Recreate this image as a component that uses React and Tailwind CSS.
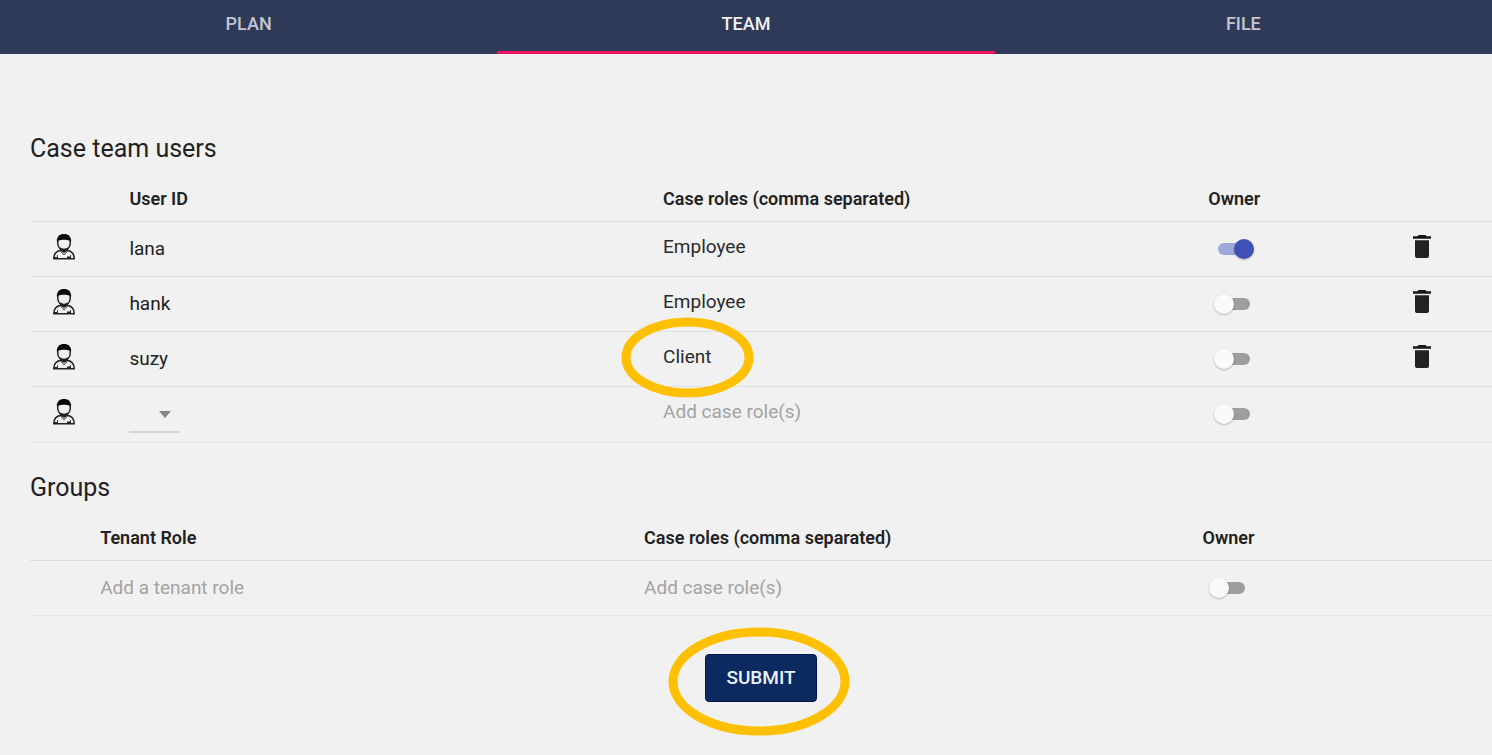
import React from "react";

const TABS = ["PLAN", "TEAM", "FILE"];

const USERS = [
  { id: "lana", role: "Employee", owner: true },
  { id: "hank", role: "Employee", owner: false },
  { id: "suzy", role: "Client", owner: false, marked: true },
];

const FIELD =
  "block w-full bg-transparent text-[19px] leading-6 text-[#2b2b2b] outline-none placeholder:text-[#a3a3a3] placeholder:opacity-100";

function PersonIcon() {
  return (
    <svg className="block h-7 w-6" viewBox="0 0 24 28" fill="none" aria-hidden="true">
      <path d="M5.8 7.5v3c0 4 3 6.400 6.200 6.400s6.200-2.400 6.200-6.400v-3" stroke="#222" strokeWidth="1.500" />
      <path d="M4.800 8.300C4.800 3.500 7.600 1 12 1s7.200 2.500 7.200 7.300C16 7 14 6.800 12 6.800S8 7 4.800 8.300Z" fill="#080808" />
      <path d="M8 14.500c2.500 1.500 5.500 1.500 8 0v3l-4 2.500-4-2.500Z" fill="#222" />
      <path d="M8.800 17.200C4.500 18 1.800 20 1.800 25.700h20.400c0-5.700-2.700-7.700-7-8.500" stroke="#222" strokeWidth="1.500" />
      <path d="M5.500 22v3.700M18.500 22v3.700M8.500 18l3.500 4 3.500-4" stroke="#444" strokeWidth="1" />
      <path d="M1.800 24h4v2h-4ZM15 23.500h4V26h-4Z" fill="#222" />
    </svg>
  );
}

function TrashIcon() {
  return (
    <svg className="block h-6 w-5" viewBox="0 0 20 24" fill="none" aria-hidden="true">
      <path d="M6.500 0h7l1 1.200H19v2.600H1V1.200h4.500Z" fill="#181818" />
      <path d="M3 5.300h14V21a2 2 0 0 1-2 2H5a2 2 0 0 1-2-2Z" fill="#222" />
    </svg>
  );
}

function Ring({ className, width, height }) {
  return (
    <svg
      className={`pointer-events-none absolute ${className}`}
      width={width}
      height={height}
      viewBox={`0 0 ${width} ${height}`}
      fill="none"
      aria-hidden="true"
    >
      <ellipse
        cx={width / 2}
        cy={height / 2}
        rx={width / 2 - 5}
        ry={height / 2 - 5}
        stroke="#ffc000"
        strokeWidth="9"
      />
    </svg>
  );
}

function Switch({ label, defaultChecked }) {
  return (
    <input
      type="checkbox"
      role="switch"
      aria-label={label}
      defaultChecked={defaultChecked}
      className="relative mx-2.5 block h-3 w-8 cursor-pointer appearance-none rounded-full bg-[#9e9e9e] before:absolute before:-top-1 before:-left-1 before:size-5 before:rounded-full before:bg-[#fafafa] before:shadow-[0_1px_2px_rgba(0,0,0,0.25)] before:content-[''] checked:bg-[#9fa8da] checked:before:left-4 checked:before:bg-[#3f51b5]"
    />
  );
}

function Heading({ children }) {
  return <h2 className="text-[25px] leading-8 text-[#222]">{children}</h2>;
}

function Th({ children }) {
  return (
    <th scope="col" className="p-0 text-left text-lg leading-6 font-semibold">
      {children}
    </th>
  );
}

export default function App() {
  return (
    <div className="min-h-screen bg-[#f1f1f1] font-['Roboto',sans-serif] text-[#222]">
      <nav className="grid h-[54px] grid-cols-3 bg-[#2f3958]">
        {TABS.map((tab) => (
          <a
            key={tab}
            href={`#${tab.toLowerCase()}`}
            aria-current={tab === "TEAM" ? "page" : undefined}
            className={
              tab === "TEAM"
                ? "flex items-center justify-center border-b-[3px] border-[#f0135f] pb-1 text-lg font-medium text-[#f1f1f4]"
                : "flex items-center justify-center border-b-[3px] border-transparent pb-1 text-lg font-medium text-[#c3c6d0]"
            }
          >
            {tab}
          </a>
        ))}
      </nav>

      <main className="pt-[79px] pl-[30px]">
        <section>
          <Heading>Case team users</Heading>
          <table className="mt-3 w-full table-fixed border-collapse">
            <colgroup>
              <col className="w-[6.8%]" />
              <col className="w-[36.5%]" />
              <col className="w-[37.3%]" />
              <col className="w-[13.9%]" />
              <col />
            </colgroup>
            <thead>
              <tr className="h-11 border-b border-[#e0e0e0]">
                <td></td>
                <Th>User ID</Th>
                <Th>Case roles (comma separated)</Th>
                <Th>Owner</Th>
                <td></td>
              </tr>
            </thead>
            <tbody>
              {USERS.map((user) => (
                <tr key={user.id} className="h-[55px] border-b border-[#e0e0e0]">
                  <td className="p-0 pb-1 pl-[22px]">
                    <PersonIcon />
                  </td>
                  <td className="p-0 text-[19px] leading-6">{user.id}</td>
                  <td className="p-0 pb-1">
                    <div className="relative">
                      <input
                        className={FIELD}
                        aria-label={`Case roles of ${user.id}`}
                        defaultValue={user.role}
                      />
                      {user.marked && <Ring className="-top-7 -left-[42px]" width={133} height={81} />}
                    </div>
                  </td>
                  <td className="p-0">
                    <Switch label={`${user.id} is owner`} defaultChecked={user.owner} />
                  </td>
                  <td className="p-0 pb-1">
                    <button type="button" aria-label={`Remove ${user.id}`} className="block cursor-pointer">
                      <TrashIcon />
                    </button>
                  </td>
                </tr>
              ))}
              <tr className="h-14 border-b border-[#e6e6e6]">
                <td className="p-0 pb-1 pl-[22px]">
                  <PersonIcon />
                </td>
                <td className="p-0">
                  <div className="relative mt-1 w-[50px]">
                    <select
                      aria-label="Add user"
                      className="block h-[34px] w-full appearance-none border-b-2 border-[#d2d2d2] bg-transparent outline-none"
                    >
                      <option value=""></option>
                    </select>
                    <svg
                      className="pointer-events-none absolute top-3 right-2 h-[7px] w-3"
                      viewBox="0 0 12 7"
                      aria-hidden="true"
                    >
                      <path d="M0 0h12L6 7Z" fill="#858585" />
                    </svg>
                  </div>
                </td>
                <td className="p-0 pb-1">
                  <input className={FIELD} aria-label="Case roles of new user" placeholder="Add case role(s)" />
                </td>
                <td className="p-0">
                  <Switch label="New user is owner" />
                </td>
                <td></td>
              </tr>
            </tbody>
          </table>
        </section>

        <section className="mt-[29px]">
          <Heading>Groups</Heading>
          <table className="mt-[13px] w-full table-fixed border-collapse">
            <colgroup>
              <col className="w-[4.8%]" />
              <col className="w-[37.2%]" />
              <col className="w-[38.2%]" />
              <col />
            </colgroup>
            <thead>
              <tr className="h-11 border-b border-[#dcdcdc]">
                <td></td>
                <Th>Tenant Role</Th>
                <Th>Case roles (comma separated)</Th>
                <Th>Owner</Th>
              </tr>
            </thead>
            <tbody>
              <tr className="h-[55px] border-b border-[#e6e6e6]">
                <td></td>
                <td className="p-0">
                  <input className={FIELD} aria-label="Tenant role" placeholder="Add a tenant role" />
                </td>
                <td className="p-0">
                  <input className={FIELD} aria-label="Case roles of group" placeholder="Add case role(s)" />
                </td>
                <td className="p-0">
                  <Switch label="Group is owner" />
                </td>
              </tr>
            </tbody>
          </table>
        </section>

        <div className="flex justify-center pt-[38px]">
          <div className="relative">
            <button
              type="button"
              className="block h-12 w-28 cursor-pointer rounded border border-[#001748] bg-[#0a2a60] text-[19px] font-medium text-[#edf0f6]"
            >
              SUBMIT
            </button>
            <Ring className="-top-[27px] -left-[37px]" width={182} height={109} />
          </div>
        </div>
      </main>
    </div>
  );
}
